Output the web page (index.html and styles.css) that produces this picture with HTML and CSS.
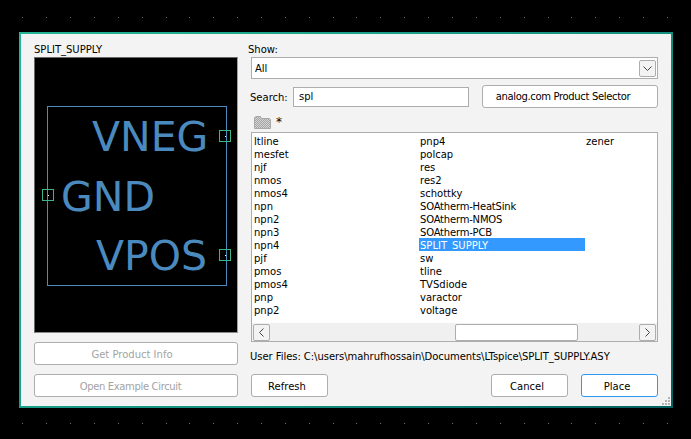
FILE: index.html
```html
<!DOCTYPE html>
<html lang="en">
<head>
<meta charset="utf-8">
<title>Select Component Symbol</title>
<link rel="stylesheet" href="styles.css">
</head>
<body>
<svg class="grid-dots" width="691" height="439" aria-hidden="true">
<path d="M22 17.5h1M46 17.5h1M70 17.5h1M94 17.5h1M118 17.5h1M142 17.5h1M166 17.5h1M189 17.5h1M213 17.5h1M237 17.5h1M261 17.5h1M285 17.5h1M309 17.5h1M333 17.5h1M356 17.5h1M380 17.5h1M404 17.5h1M428 17.5h1M452 17.5h1M476 17.5h1M500 17.5h1M524 17.5h1M548 17.5h1M571 17.5h1M595 17.5h1M619 17.5h1M643 17.5h1M667 17.5h1M22 423.5h1M46 423.5h1M70 423.5h1M94 423.5h1M118 423.5h1M142 423.5h1M166 423.5h1M189 423.5h1M213 423.5h1M237 423.5h1M261 423.5h1M285 423.5h1M309 423.5h1M333 423.5h1M356 423.5h1M380 423.5h1M404 423.5h1M428 423.5h1M452 423.5h1M476 423.5h1M500 423.5h1M524 423.5h1M548 423.5h1M571 423.5h1M595 423.5h1M619 423.5h1M643 423.5h1M667 423.5h1" stroke="#6e6e6e" fill="none"/>
</svg>
<main class="dialog">
  <section class="left">
    <div class="caption">SPLIT_SUPPLY</div>
    <div class="preview">
      <div class="symbol-box"></div>
      <span class="sym sym-vneg">VNEG</span>
      <span class="sym sym-gnd">GND</span>
      <span class="sym sym-vpos">VPOS</span>
      <span class="pin pin-vneg"></span>
      <span class="pin pin-gnd"></span>
      <span class="pin pin-vpos"></span>
    </div>
    <button class="btn btn-wide" disabled>Get Product Info</button>
    <button class="btn btn-wide btn-example" disabled>Open Example Circuit</button>
  </section>
  <section class="right">
    <div class="caption caption-show">Show:</div>
    <div class="select">
      <span>All</span>
      <span class="select-arrow">
        <svg width="9" height="5" viewBox="0 0 9 5"><path d="M.5.5l4 4 4-4" fill="none" stroke="#444"/></svg>
      </span>
    </div>
    <div class="search-row">
      <label class="search-label">Search:</label>
      <div class="search-input">spl</div>
      <button class="btn btn-selector">analog.com Product Selector</button>
    </div>
    <div class="path-row">
      <svg class="folder" width="17" height="14" viewBox="0 0 17 14">
        <defs>
          <pattern id="dither" width="2" height="2" patternUnits="userSpaceOnUse">
            <rect width="2" height="2" fill="#d4d4d4"/>
            <rect width="1" height="1" fill="#a4a4a4"/>
            <rect x="1" y="1" width="1" height="1" fill="#a4a4a4"/>
          </pattern>
        </defs>
        <path d="M.5 13.5v-11l1-1h5l1 2h8l1 1v9z" fill="url(#dither)" stroke="#a8a8a8"/>
      </svg>
      <span class="star">*</span>
    </div>
    <div class="list">
      <div class="columns">
        <ul class="col col-first">
          <li>ltline</li><li>mesfet</li><li>njf</li><li>nmos</li><li>nmos4</li><li>npn</li><li>npn2</li>
          <li>npn3</li><li>npn4</li><li>pjf</li><li>pmos</li><li>pmos4</li><li>pnp</li><li>pnp2</li>
        </ul>
        <ul class="col">
          <li>pnp4</li><li>polcap</li><li>res</li><li>res2</li><li>schottky</li><li class="tight">SOAtherm-HeatSink</li><li class="tight">SOAtherm-NMOS</li>
          <li class="tight">SOAtherm-PCB</li><li class="selected">SPLIT_SUPPLY</li><li>sw</li><li>tline</li><li>TVSdiode</li><li>varactor</li><li>voltage</li>
        </ul>
        <ul class="col">
          <li>zener</li>
        </ul>
      </div>
      <div class="hscroll">
        <span class="scroll-btn">
          <svg width="5" height="9" viewBox="0 0 5 9"><path d="M4.5.5l-4 4 4 4" fill="none" stroke="#444"/></svg>
        </span>
        <span class="scroll-thumb"></span>
        <span class="scroll-btn">
          <svg width="5" height="9" viewBox="0 0 5 9"><path d="M.5.5l4 4-4 4" fill="none" stroke="#444"/></svg>
        </span>
      </div>
    </div>
    <div class="user-files">User Files: C:\users\mahrufhossain\Documents\LTspice\SPLIT_SUPPLY.ASY</div>
    <div class="actions">
      <button class="btn btn-action">Refresh</button>
      <span class="spacer"></span>
      <button class="btn btn-action">Cancel</button>
      <button class="btn btn-action btn-default">Place</button>
    </div>
  </section>
  <svg class="grip" width="10" height="10" viewBox="0 0 10 10" aria-hidden="true">
    <path d="M7 1h2v2H7zM4 4h2v2H4zM7 4h2v2H7zM1 7h2v2H1zM4 7h2v2H4zM7 7h2v2H7z" fill="#b4b4b4"/>
  </svg>
</main>
</body>
</html>
```
FILE: styles.css
```css
* { box-sizing: border-box; }
html { background: #000; }
body {
  position: relative;
  margin: 0;
  width: 691px;
  height: 439px;
  background: #000;
  padding: 32px 0 0 19px;
  font-family: "DejaVu Sans", sans-serif;
  font-size: 10px;
  color: #000;
}
.grid-dots { position: absolute; left: 0; top: 0; display: block; }
.dialog {
  position: relative;
  width: 654px;
  height: 376px;
  display: flex;
  gap: 13px;
  padding: 9px 13px 0 13px;
  background: #f3f3f3;
  border: 2px solid;
  border-image: linear-gradient(135deg, #23b596, #14917f 60%, #055f60) 1;
}
.left { width: 204px; flex: none; display: flex; flex-direction: column; }
.right { width: 407px; flex: none; display: flex; flex-direction: column; }
.caption { height: 14px; line-height: 14px; white-space: nowrap; }
.caption-show { margin-left: -3px; line-height: 13px; }
.preview {
  position: relative;
  height: 276px;
  background: #000;
  border: 1px solid #6a6a6a;
  border-right-color: #a0a0a0;
  border-bottom-color: #8a8a8a;
  overflow: hidden;
}
.symbol-box {
  position: absolute;
  left: 12px; top: 48px;
  width: 180px; height: 180px;
  border: 1px solid #4a8abf;
}
.sym {
  position: absolute;
  font-size: 41px;
  line-height: 42px;
  color: #4a8abf;
  white-space: nowrap;
}
.sym-vneg { left: 57px; top: 58px; }
.sym-gnd { left: 26px; top: 118px; }
.sym-vpos { left: 61px; top: 177px; }
.pin {
  position: absolute;
  width: 12px; height: 12px;
  border: 1px solid #3cb683;
  background: linear-gradient(#fff, #fff) center / 1px 1px no-repeat;
}
.pin-vneg { left: 184px; top: 72px; }
.pin-gnd { left: 7px; top: 131px; }
.pin-vpos { left: 184px; top: 191px; }
.btn {
  font: inherit;
  line-height: 15px;
  color: #000;
  background: #fff;
  border: 1px solid #adadad;
  border-radius: 3px;
  padding: 2px 0 0;
  height: 23px;
}
.btn:disabled { color: #a3a3a3; }
.btn-wide { width: 204px; margin-top: 9px; padding-right: 8px; }
.btn-example { letter-spacing: -0.35px; padding-right: 11px; }
.select {
  height: 22px;
  display: flex;
  align-items: center;
  justify-content: space-between;
  padding: 0 1px 0 3px;
  background: #fff;
  border: 1px solid #adadad;
}
.select-arrow, .scroll-btn {
  display: flex;
  flex: none;
  align-items: center;
  justify-content: center;
  width: 17px;
  height: 17px;
  background: #f3f3f3;
  border: 1px solid #adadad;
  border-radius: 2px;
}
.search-row {
  display: flex;
  align-items: center;
  height: 23px;
  margin: 6px 0 0 -1px;
}
.search-label {
  width: 43px;
  flex: none;
  line-height: 16px;
  padding-top: 2px;
  white-space: nowrap;
}
.search-input {
  width: 176px;
  flex: none;
  height: 20px;
  line-height: 18px;
  padding-left: 5px;
  background: #fff;
  border: 1px solid #adadad;
}
.btn-selector { width: 176px; flex: none; margin-left: 13px; padding: 0 14px 0 0; letter-spacing: -0.34px; }
.path-row {
  display: flex;
  align-items: center;
  gap: 5px;
  height: 18px;
  margin-top: 5px;
  padding-left: 3px;
}
.star { font-size: 12px; line-height: 14px; }
.list {
  height: 210px;
  margin-top: 1px;
  display: flex;
  flex-direction: column;
  background: #fff;
  border: 1px solid #adadad;
}
.columns { flex: 1; display: flex; padding-top: 1px; }
.col { flex: none; width: 166px; margin: 0; padding: 0; list-style: none; }
.col-first { width: 167px; }
.col li { height: 13px; line-height: 15px; padding-left: 1px; white-space: nowrap; overflow: hidden; }
.col-first li { padding-left: 2px; }
.col .tight { letter-spacing: -0.2px; }
.col .selected { background: #3399ff; color: #fff; }
.hscroll {
  height: 18px;
  flex: none;
  display: flex;
  align-items: center;
  padding: 0 1px;
  background: #f0f0f0;
}
.scroll-thumb {
  width: 123px; height: 17px;
  flex: none;
  margin-left: 185px;
  margin-right: 61px;
  background: #fff;
  border: 1px solid #adadad;
  border-radius: 2px;
}
.user-files { height: 14px; line-height: 16px; margin-top: 7px; margin-left: -1px; letter-spacing: -0.05px; white-space: nowrap; }
.actions { display: flex; gap: 13px; margin-top: 11px; }
.btn-action { width: 77px; padding-right: 5px; }
.spacer { flex: 1; }
.btn-default { border-color: #2f96f3; }
.grip { position: absolute; right: 0; bottom: 0; }
```
